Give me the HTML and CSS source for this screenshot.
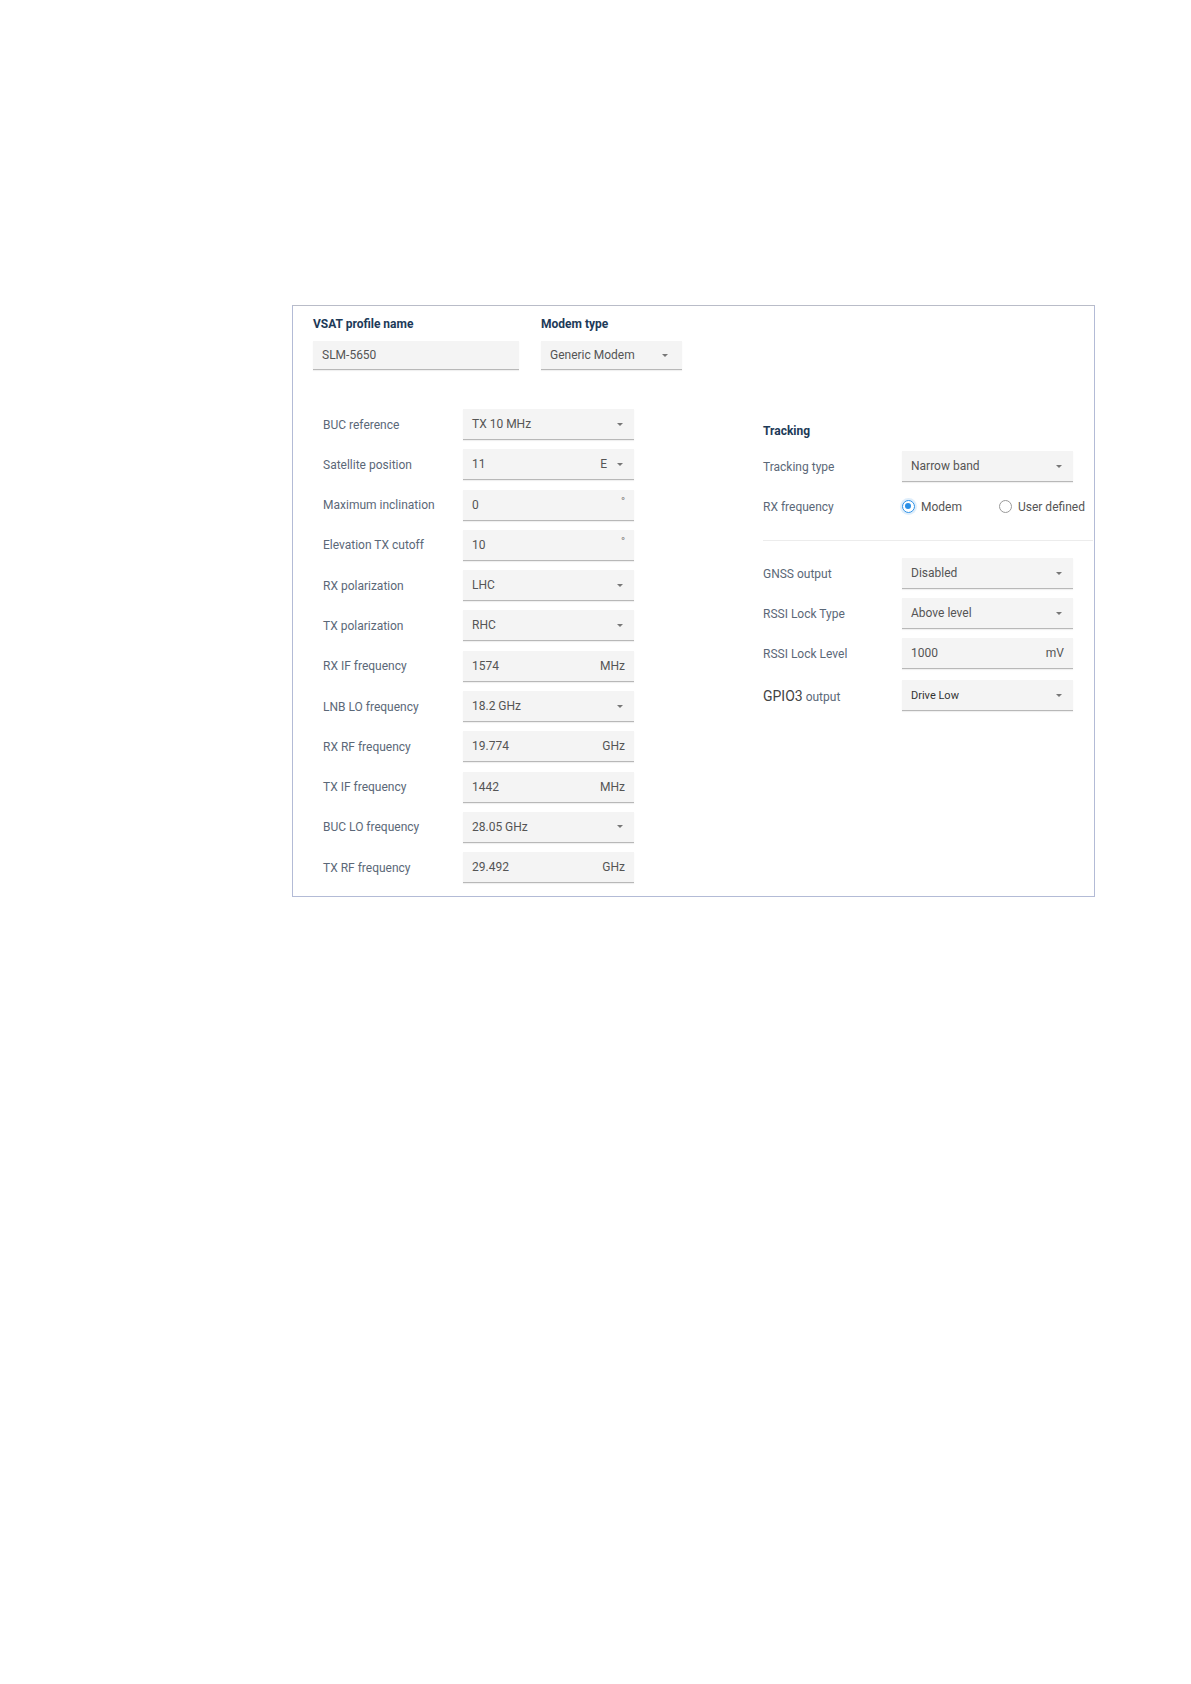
FILE: index.html
```html
<!DOCTYPE html>
<html>
<head>
<meta charset="utf-8">
<link rel="stylesheet" href="styles.css">
</head>
<body>
<div class="panel">
  <div class="head">
    <div class="hfield">
      <div class="hlabel">VSAT profile name</div>
      <div class="inp w-name"><span class="val">SLM-5650</span></div>
    </div>
    <div class="hfield">
      <div class="hlabel">Modem type</div>
      <div class="inp w-modem"><span class="val">Generic Modem</span><span class="arrow"></span></div>
    </div>
  </div>
  <div class="cols">
    <div class="lcol">
      <div class="row"><div class="lbl">BUC reference</div><div class="inp w-std"><span class="val">TX 10 MHz</span><span class="arrow"></span></div></div>
      <div class="row"><div class="lbl">Satellite position</div><div class="inp w-std"><span class="val">11</span><span class="unit">E</span><span class="arrow sm"></span></div></div>
      <div class="row"><div class="lbl">Maximum inclination</div><div class="inp w-std"><span class="val">0</span><span class="deg">°</span></div></div>
      <div class="row"><div class="lbl">Elevation TX cutoff</div><div class="inp w-std"><span class="val">10</span><span class="deg">°</span></div></div>
      <div class="row"><div class="lbl">RX polarization</div><div class="inp w-std"><span class="val">LHC</span><span class="arrow"></span></div></div>
      <div class="row"><div class="lbl">TX polarization</div><div class="inp w-std"><span class="val">RHC</span><span class="arrow"></span></div></div>
      <div class="row"><div class="lbl">RX IF frequency</div><div class="inp w-std"><span class="val">1574</span><span class="unit">MHz</span></div></div>
      <div class="row"><div class="lbl">LNB LO frequency</div><div class="inp w-std"><span class="val">18.2 GHz</span><span class="arrow"></span></div></div>
      <div class="row"><div class="lbl">RX RF frequency</div><div class="inp w-std"><span class="val">19.774</span><span class="unit">GHz</span></div></div>
      <div class="row"><div class="lbl">TX IF frequency</div><div class="inp w-std"><span class="val">1442</span><span class="unit">MHz</span></div></div>
      <div class="row"><div class="lbl">BUC LO frequency</div><div class="inp w-std"><span class="val">28.05 GHz</span><span class="arrow"></span></div></div>
      <div class="row"><div class="lbl">TX RF frequency</div><div class="inp w-std"><span class="val">29.492</span><span class="unit">GHz</span></div></div>
    </div>
    <div class="rcol">
      <div class="sect">Tracking</div>
      <div class="row"><div class="lbl">Tracking type</div><div class="inp w-std"><span class="val">Narrow band</span><span class="arrow"></span></div></div>
      <div class="row"><div class="lbl">RX frequency</div>
        <div class="radios">
          <span class="radio on"></span><span class="rtext">Modem</span>
          <span class="radio off"></span><span class="rtext">User defined</span>
        </div>
      </div>
      <div class="divider"></div>
      <div class="row"><div class="lbl">GNSS output</div><div class="inp w-std"><span class="val">Disabled</span><span class="arrow"></span></div></div>
      <div class="row"><div class="lbl">RSSI Lock Type</div><div class="inp w-std"><span class="val">Above level</span><span class="arrow"></span></div></div>
      <div class="row"><div class="lbl">RSSI Lock Level</div><div class="inp w-std"><span class="val">1000</span><span class="unit">mV</span></div></div>
      <div class="row gpio"><div class="lbl"><span class="big">GPIO3</span> output</div><div class="inp w-std"><span class="val small">Drive Low</span><span class="arrow"></span></div></div>
    </div>
  </div>
</div>
</body>
</html>
```

FILE: styles.css
```css
html, body {
  margin: 0;
  padding: 0;
  background: #ffffff;
}
body {
  width: 1191px;
  height: 1684px;
  font-family: Roboto, "Liberation Sans", sans-serif;
  font-size: 12px;
  color: #5b6878;
}
.panel {
  box-sizing: border-box;
  margin: 305px 0 0 292px;
  width: 803px;
  height: 592px;
  border: 1.5px solid #b3bbd6;
  border-top-color: #b9bcc8;
  padding: 11px 0 0 20px;
}
.head {
  display: flex;
  gap: 22px;
}
.hlabel {
  font-weight: 700;
  font-size: 12px;
  line-height: 14px;
  color: #1d3a58;
  margin-bottom: 10px;
}
.inp {
  box-sizing: border-box;
  display: flex;
  align-items: center;
  background: #f4f4f4;
  border-bottom: 1px solid #b8b8b8;
  box-shadow: 0 1px 1px rgba(0,0,0,0.06);
  padding: 0 9px;
  height: 31px;
  color: #555;
  font-size: 12px;
}
.w-name { width: 206px; height: 29px; }
.w-modem { width: 141px; height: 29px; padding-right: 12px; }
.w-std { width: 171px; }
.val {
  flex: 1;
}
.val.small {
  font-size: 11px;
  color: #333;
}
.unit {
  color: #555;
}
.deg {
  color: #777;
  font-size: 11px;
  margin-top: -6px;
}
.arrow {
  width: 0;
  height: 0;
  border-left: 3px solid transparent;
  border-right: 3px solid transparent;
  border-top: 3px solid #777;
  margin-right: 2px;
}
.arrow.sm { margin-left: 10px; }
.cols {
  display: flex;
  margin-top: 39px;
}
.lcol {
  margin-left: 10px;
  width: 311px;
  display: flex;
  flex-direction: column;
  gap: 9.3px;
}
.row {
  display: flex;
  align-items: center;
  height: 31px;
}
.lbl {
  width: 140px;
  flex-shrink: 0;
  color: #5b6878;
}
.rcol {
  margin-left: 129px;
  width: 330px;
  display: flex;
  flex-direction: column;
}
.rcol .lbl { width: 139px; }
.sect {
  margin-top: 15px;
  font-weight: 700;
  font-size: 12px;
  line-height: 14px;
  color: #1d3a58;
  margin-bottom: 13px;
}
.rcol .row + .row { margin-top: 9px; }
.divider {
  height: 1px;
  background: #ececec;
  margin: 18px 0 17px 0;
}
.rcol .row.gpio { margin-top: 11px; }
.radios {
  display: flex;
  align-items: center;
  color: #555;
}
.radio {
  box-sizing: border-box;
  width: 13px;
  height: 13px;
  border-radius: 50%;
  display: inline-block;
  position: relative;
}
.radio.on {
  border: 1.5px solid #2a8fe6;
  box-shadow: 0 0 0 2px rgba(42,143,230,0.15);
}
.radio.on::after {
  content: "";
  position: absolute;
  left: 2px;
  top: 2px;
  width: 6px;
  height: 6px;
  border-radius: 50%;
  background: #2a8fe6;
}
.radio.off {
  border: 1.2px solid #9a9a9a;
  margin-left: 37px;
}
.rtext {
  margin-left: 6px;
}
.big {
  font-size: 14px;
  color: #444;
}
```
